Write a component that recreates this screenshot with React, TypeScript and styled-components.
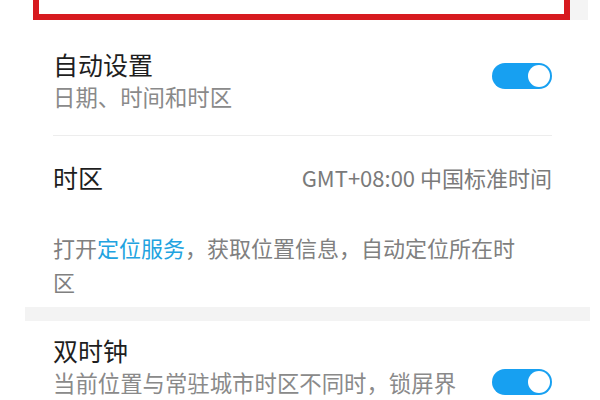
import styled, {createGlobalStyle} from 'styled-components';

const GlobalStyle = createGlobalStyle`
body {
    margin: 0;
    background: #ffffff;
    font-family: "Noto Sans CJK SC", "Noto Sans", sans-serif;
}
`

const Page = styled.div`
width: 600px;
height: 400px;
overflow: hidden;
background: #ffffff;
`

const TopStrip = styled.div`
display: flex;
height: 20px;
padding-left: 33px;
`

const HighlightBox = styled.div`
width: 537px;
box-sizing: border-box;
border: 6px solid #d71a1f;
border-top: 0;
background: #ffffff;
`

const StripTail = styled.div`
width: 18px;
background: #f4f4f4;
`

const Section = styled.div`
display: flex;
flex-direction: column;
margin: 0 48px 0 53px;
`

const Row = styled.div<{$pt: number; $pb: number}>`
display: flex;
align-items: center;
justify-content: space-between;
padding: ${p => p.$pt}px 0 ${p => p.$pb}px;
`

const TextCol = styled.div<{$max?: number}>`
display: flex;
flex-direction: column;
max-width: ${p => p.$max ? p.$max + 'px' : 'none'};
`

const Title = styled.div`
font-size: 25px;
line-height: 32px;
color: #1e1e1e;
`

const Sub = styled.div`
font-size: 22.4px;
line-height: 32px;
color: #8a8a8a;
`

const Value = styled.div`
font-size: 22px;
line-height: 32px;
color: #7a7a7a;
`

const Divider = styled.div`
height: 1px;
background: #ededed;
`

const Info = styled.p`
margin: 12px 0 9px;
width: 480px;
font-size: 22px;
line-height: 34px;
color: #808080;
`

const Link = styled.span`
color: #22a3e0;
`

const Band = styled.div`
height: 14px;
margin: 0 10px 0 25px;
background: #f3f3f3;
`

const Track = styled.div<{$lift?: number}>`
flex: none;
width: 60px;
height: 26px;
margin-bottom: ${p => p.$lift ?? 0}px;
border-radius: 13px;
background: #17a0f1;
display: flex;
align-items: center;
justify-content: flex-end;
padding: 0 2px;
box-sizing: border-box;
`

const Knob = styled.div`
width: 22px;
height: 22px;
border-radius: 50%;
background: #ffffff;
`

function Toggle({lift}: {lift?: number}) {
    return (
        <Track $lift={lift}>
            <Knob />
        </Track>
    );
}

export default function App() {
    return (
        <Page>
            <GlobalStyle />
            <TopStrip>
                <HighlightBox />
                <StripTail />
            </TopStrip>
            <Section>
                <Row $pt={28} $pb={23}>
                    <TextCol>
                        <Title>自动设置</Title>
                        <Sub>日期、时间和时区</Sub>
                    </TextCol>
                    <Toggle lift={8} />
                </Row>
                <Divider />
                <Row $pt={25} $pb={25}>
                    <Title>时区</Title>
                    <Value>GMT+08:00 中国标准时间</Value>
                </Row>
                <Info>
                    打开<Link>定位服务</Link>，获取位置信息，自动定位所在时区
                </Info>
            </Section>
            <Band />
            <Section>
                <Row $pt={13} $pb={0}>
                    <TextCol $max={415}>
                        <Title>双时钟</Title>
                        <Sub>当前位置与常驻城市时区不同时，锁屏界面显示双时钟</Sub>
                    </TextCol>
                    <Toggle />
                </Row>
            </Section>
        </Page>
    );
}
